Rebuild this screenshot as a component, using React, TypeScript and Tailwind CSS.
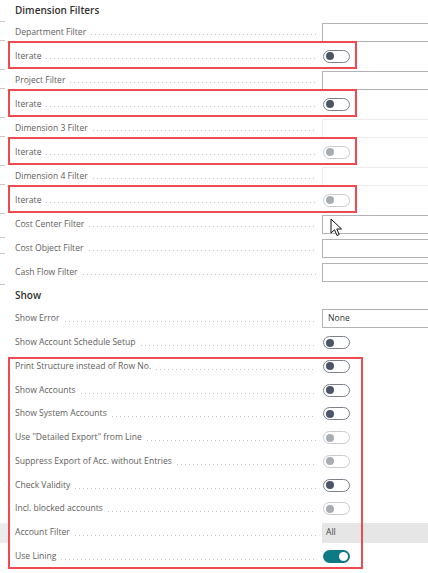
import type { ReactNode } from "react";
import clsx from "clsx";

type Kind = "off" | "dis" | "on";

const Toggle = ({ kind }: { kind: Kind }) =>
  kind === "on" ? (
    <div className="ml-[1px] flex h-[13px] w-[27px] items-center justify-end rounded-full bg-[#0e7a83] px-[2px]">
      <div className="size-[9px] rounded-full bg-white" />
    </div>
  ) : (
    <div
      className={clsx(
        "ml-[1px] flex h-[13px] w-[27px] items-center rounded-full border-[1.5px] px-[2px]",
        kind === "dis" ? "border-[#c9cbce]" : "border-[#7b818b]"
      )}
    >
      <div className={clsx("size-[8px] rounded-full", kind === "dis" ? "bg-[#a8adb4]" : "bg-[#4a5567]")} />
    </div>
  );

const Field = ({ value, faint }: { value?: string; faint?: boolean }) => (
  <div
    className={clsx(
      "flex h-[19px] w-[120px] items-center border bg-white px-[5px] text-[#323130]",
      faint ? "border-[#ececec]" : "border-[#b3b3b3]"
    )}
  >
    {value}
  </div>
);

const Row = ({
  label,
  children,
  tint,
  tight,
}: {
  label: string;
  children?: ReactNode;
  tint?: boolean;
  tight?: boolean;
}) => (
  <div className={clsx("relative flex items-center", tight ? "h-[23.75px]" : "h-[24px]")}>
    {tint && <div className="absolute inset-y-[2px] left-0 w-[8px] bg-[#ececec]" />}
    <div className="flex w-[318px] shrink-0 items-center pl-[15px] pr-[2px]">
      <span className="whitespace-nowrap text-[#5f5e5c]">{label}</span>
      <span className="ml-[5px] h-[1px] flex-1 translate-y-[3px] bg-[linear-gradient(to_right,#c4c4c4_1px,transparent_1px)] bg-[length:4px_1px] bg-repeat-x" />
    </div>
    <div className="ml-[4px] min-w-0 flex-1">{children}</div>
  </div>
);

const Heading = ({ children, h }: { children: string; h: string }) => (
  <div className={clsx("flex items-center pl-[15px] text-[10px] font-semibold text-[#323130]", h)}>{children}</div>
);

// red annotation around a single "Iterate" row
const Marked = ({ kind }: { kind: Kind }) => (
  <div className="relative">
    <Row label="Iterate">
      <Toggle kind={kind} />
    </Row>
    <div className="pointer-events-none absolute -top-[3px] bottom-[-1px] left-[8px] w-[349px] border-2 border-[#ef4a50]" />
  </div>
);

const Cursor = () => (
  <svg className="pointer-events-none absolute left-[8px] top-[3px]" width="13" height="19" viewBox="0 0 13 19">
    <path d="M1 1 L1 15 L4.5 11.8 L7 17.5 L9.2 16.5 L6.8 11 L11.5 11 Z" fill="#fff" stroke="#111" strokeWidth="1" strokeLinejoin="round" />
  </svg>
);

const edgeMarks = [21, 40, 69, 88, 117, 136, 165, 184, 213, 237, 253, 284];

export default function App() {
  return (
    <div className="relative h-[573px] w-[428px] overflow-hidden bg-white font-['Open_Sans',sans-serif] text-[8.6px]">
      {edgeMarks.map((y) => (
        <div key={y} className="absolute left-0 h-px w-[5px] bg-[#c6c6c6]" style={{ top: y }} />
      ))}

      <Heading h="h-[20px]">Dimension Filters</Heading>
      <Row label="Department Filter">
        <Field />
      </Row>
      <Marked kind="off" />
      <Row label="Project Filter">
        <Field />
      </Row>
      <Marked kind="off" />
      <Row label="Dimension 3 Filter">
        <Field faint />
      </Row>
      <Marked kind="dis" />
      <Row label="Dimension 4 Filter">
        <Field faint />
      </Row>
      <Marked kind="dis" />
      <Row label="Cost Center Filter">
        <div className="relative">
          <Field />
          <Cursor />
        </div>
      </Row>
      <Row label="Cost Object Filter">
        <Field />
      </Row>
      <Row label="Cash Flow Filter">
        <Field />
      </Row>

      <Heading h="h-[23px]">Show</Heading>
      <Row label="Show Error" tight>
        <Field value="None" />
      </Row>
      <Row label="Show Account Schedule Setup" tight>
        <Toggle kind="off" />
      </Row>

      <div className="relative">
        <Row label="Print Structure instead of Row No." tight>
          <Toggle kind="off" />
        </Row>
        <Row label="Show Accounts" tight>
          <Toggle kind="off" />
        </Row>
        <Row label="Show System Accounts" tight>
          <Toggle kind="off" />
        </Row>
        <Row label='Use "Detailed Export" from Line' tight>
          <Toggle kind="dis" />
        </Row>
        <Row label="Suppress Export of Acc. without Entries" tight>
          <Toggle kind="dis" />
        </Row>
        <Row label="Check Validity" tight>
          <Toggle kind="off" />
        </Row>
        <Row label="Incl. blocked accounts" tight>
          <Toggle kind="dis" />
        </Row>
        <Row label="Account Filter" tint tight>
          <div className="flex h-[20px] items-center bg-[#e6e6e6] pl-[4px] text-[#444]">All</div>
        </Row>
        <Row label="Use Lining" tight>
          <Toggle kind="on" />
        </Row>
        <div className="pointer-events-none absolute bottom-[-1px] left-[8px] top-[2px] w-[355px] border-2 border-[#ef4a50]" />
      </div>
    </div>
  );
}
